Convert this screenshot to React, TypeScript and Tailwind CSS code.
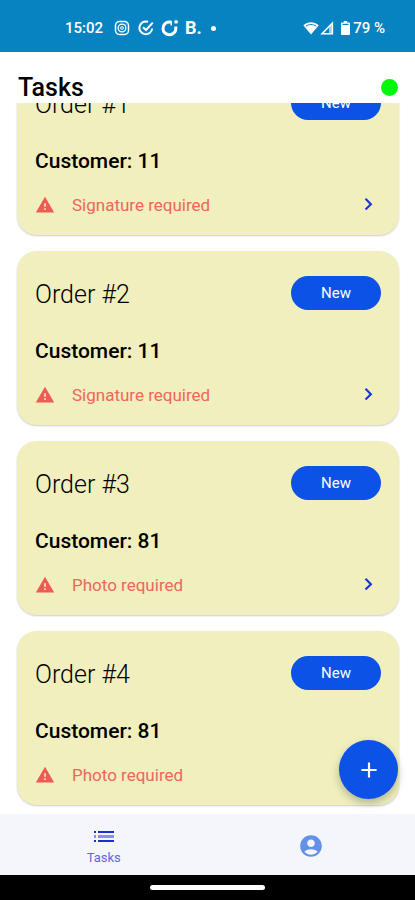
import { MdAccountCircle, MdAdd, MdWarning } from "react-icons/md"

const orders = [
  { id: 1, customer: 11, requirement: "Signature required" },
  { id: 2, customer: 11, requirement: "Signature required" },
  { id: 3, customer: 81, requirement: "Photo required" },
  { id: 4, customer: 81, requirement: "Photo required" },
]

function StatusBar() {
  return (
    <div className="flex h-[52px] shrink-0 items-center justify-between bg-[#0883c2] pt-1 pr-[30px] pl-[65px] text-white">
      <div className="flex items-center">
        <span className="w-[37px] text-[15px] leading-5 font-medium">15:02</span>
        <svg className="ml-3 size-4" viewBox="0 0 16 16" fill="none" stroke="currentColor">
          <rect x="1.5" y="1.5" width="13" height="13" rx="4" strokeWidth="1.5" />
          <circle cx="8" cy="8" r="3.8" strokeWidth="1.3" />
          <circle cx="8" cy="8" r="1.4" strokeWidth="1" />
          <circle cx="12" cy="4" r="0.6" fill="currentColor" stroke="none" />
        </svg>
        <svg className="ml-2 size-4" viewBox="0 0 16 16" fill="none" stroke="currentColor" strokeWidth="2">
          <path d="M10 1.8A6.4 6.4 0 1 0 14.2 8.5" />
          <path d="M5 7.2 8 10l6.8-7.4" />
        </svg>
        <svg className="ml-[7px] size-[18px]" viewBox="0 0 18 18" fill="none" stroke="currentColor">
          <path d="M10.5 3H8.4A6.4 6.4 0 1 0 14.8 9.4V7.6" strokeWidth="3" />
          <path d="M10.2 2V6.4" strokeWidth="1.5" />
          <rect x="13.4" y="1.2" width="3.4" height="3.4" rx="1" fill="currentColor" stroke="none" />
        </svg>
        <span className="ml-[6px] text-lg leading-5 font-bold">B.</span>
        <span className="ml-[9px] size-[5px] rounded-full bg-white" />
      </div>
      <div className="flex items-center">
        <svg className="h-[14px] w-4" viewBox="0 0 16 14">
          <path d="M8 13.5.3 4.2C4.6.2 11.4.2 15.7 4.2z" fill="currentColor" />
          <path d="M2.8 5.2C6 3 10 3 13.2 5.2" fill="none" stroke="#0883c2" strokeWidth="1" />
        </svg>
        <svg className="ml-px h-[14px] w-[14px]" viewBox="0 0 14 14">
          <path d="M12.4 2.2v10.6H2z" fill="none" stroke="currentColor" strokeWidth="1.5" />
          <path d="M9 6v7h4V2z" fill="currentColor" opacity="0.6" />
        </svg>
        <svg className="ml-[7px] h-[14px] w-[9px]" viewBox="0 0 9 14">
          <path d="M2.8 0h3.4v1.4H8A1 1 0 0 1 9 2.4V13a1 1 0 0 1-1 1H1a1 1 0 0 1-1-1V2.4a1 1 0 0 1 1-1h1.8z" fill="currentColor" />
          <path d="M1.5 3.4h6" stroke="#0883c2" strokeWidth="1.2" />
        </svg>
        <span className="ml-[3px] text-[15px] leading-5 font-medium">79 %</span>
      </div>
    </div>
  )
}

function OrderCard({ order }: { order: (typeof orders)[number] }) {
  return (
    <li className="shrink-0 rounded-[20px] bg-[#f0efbd] px-[18px] pt-[25px] pb-[18px] shadow-[0_1px_2px_rgba(0,0,0,0.2)]">
      <div className="flex items-start justify-between">
        <h2 className="text-[25px] leading-[38px] font-light text-black">Order #{order.id}</h2>
        <button className="h-[34px] w-[90px] rounded-full bg-[#0d52e6] text-[15px] text-white">New</button>
      </div>
      <p className="mt-[23px] text-[21px] leading-7 font-medium text-black">Customer: {order.customer}</p>
      <div className="mt-[18px] flex h-6 items-center text-[#ee5a54]">
        <MdWarning className="size-5" />
        <span className="ml-[17px] text-[17px] leading-6 text-[#ee665c]">{order.requirement}</span>
        <button aria-label={`Open order ${order.id}`} className="ml-auto text-[#1d35d4]">
          <svg className="size-6" viewBox="0 0 24 24" fill="none" stroke="currentColor" strokeWidth="2.1">
            <path d="M8.5 5.8 13.9 11.2 8.5 16.6" />
          </svg>
        </button>
      </div>
    </li>
  )
}

export default function App() {
  return (
    <div className="flex h-screen flex-col bg-white font-['Roboto',sans-serif]">
      <StatusBar />

      <header className="flex shrink-0 items-center justify-between pt-5 pr-[17px] pl-[18px]">
        <h1 className="text-[25px] leading-[31px] font-medium text-black">Tasks</h1>
        <span className="size-[17px] rounded-full bg-[#00f80c]" />
      </header>

      {/* The list rests at its end, so the first card runs under the header */}
      <main className="relative flex min-h-0 flex-1 flex-col">
        <ul className="flex min-h-0 flex-1 flex-col justify-end gap-4 overflow-hidden pr-4 pb-[9px] pl-[17px]">
          {orders.map((order) => (
            <OrderCard key={order.id} order={order} />
          ))}
        </ul>
        <button
          aria-label="Add task"
          className="absolute right-[17px] bottom-[15px] flex size-[59px] items-center justify-center rounded-full bg-[#0d52e6] text-white shadow-[0_4px_8px_rgba(0,0,0,0.25)]"
        >
          <MdAdd className="size-[26px]" />
        </button>
      </main>

      <nav className="grid h-[61px] shrink-0 grid-cols-2 bg-[#f4f6fb]">
        <a href="#tasks" className="flex flex-col items-center justify-center pt-[6px] text-[#5f69de]">
          <svg className="h-[14px] w-5" viewBox="0 0 20 14" fill="#1c2ed0">
            <path d="M0 1h2v2H0zM4 1h16v2H4zM0 10h2v2H0zM4 10h16v2H4z" />
            <path d="M0 5h2v3H0zM4 5h16v3H4z" opacity="0.5" />
          </svg>
          <span className="mt-[6px] text-[13px] leading-4">Tasks</span>
        </a>
        <a href="#account" aria-label="Account" className="flex items-center justify-center pt-[2px] text-[#6390e8]">
          <MdAccountCircle className="size-[26px]" />
        </a>
      </nav>

      <div className="flex h-[25px] shrink-0 items-center justify-center bg-black">
        <span className="h-[5px] w-[115px] rounded-full bg-white" />
      </div>
    </div>
  )
}
